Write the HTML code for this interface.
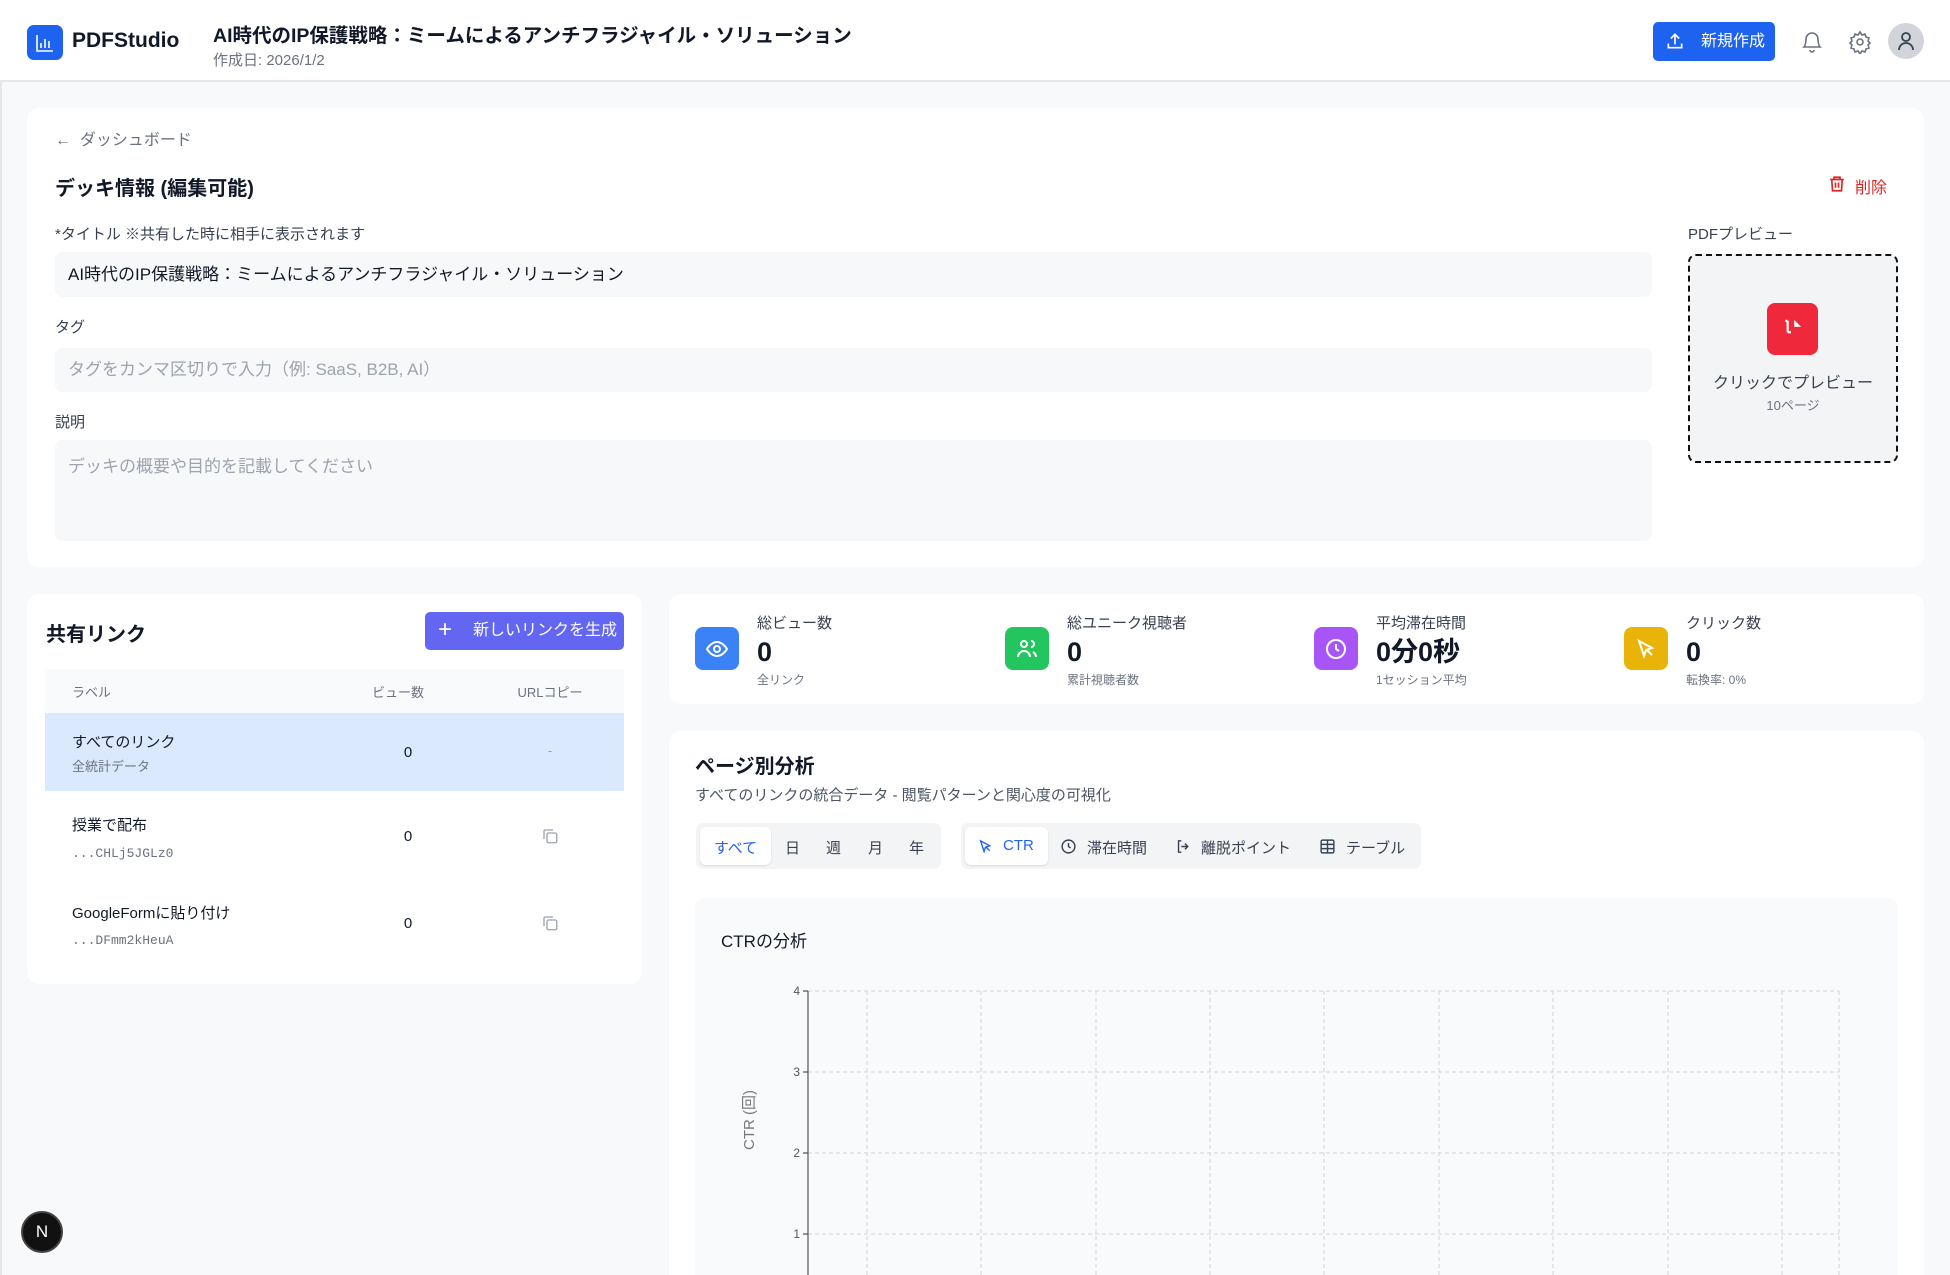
<!DOCTYPE html>
<html style="overflow:hidden;height:1275px"><head><meta charset="utf-8">
<style>
*{box-sizing:border-box;margin:0;padding:0}
html,body{overflow:hidden}
body{width:1950px;height:1275px;background:#f8f9fb;font-family:"Liberation Sans","Noto Sans CJK JP",sans-serif;color:#111827;position:relative}
.a{position:absolute}
.card{position:absolute;background:#fff;border-radius:12px}
.input{position:absolute;background:#f7f8fa;border-radius:8px;font-size:17px;color:#9ca3af;padding-left:13px}
.lbl{position:absolute;font-size:15px;color:#374151}
.stat .v{font-size:27px;font-weight:bold;color:#111827;line-height:34px;margin-top:2px}
.stat .s{font-size:12px;color:#6b7280;margin-top:2px}
</style></head><body>
<div class="a" style="left:0;top:0;width:2px;height:1275px;background:#e5e7eb"></div>
<!-- header -->
<div class="a" style="left:0;top:0;width:1950px;height:82px;background:#fff;border-bottom:2px solid #e5e7eb"></div>
<div class="a" style="left:27px;top:25px;width:36px;height:35px;background:#1d63f0;border-radius:7px"></div>
<svg class="a" style="left:33px;top:31px" width="24" height="24" viewBox="0 0 24 24" fill="none" stroke="#fff" stroke-width="1.6"><path d="M4 4v16h16M8 17v-5M12 17V8M16 17v-7"/></svg>
<div class="a" style="left:72px;top:29px;font-size:21px;font-weight:bold;color:#111827">PDFStudio</div>
<div class="a" style="left:213px;top:19px;font-size:19.5px;font-weight:bold;color:#111827">AI時代のIP保護戦略：ミームによるアンチフラジャイル・ソリューション</div>
<div class="a" style="left:213px;top:49px;font-size:15px;color:#6b7280">作成日: 2026/1/2</div>
<div class="a" style="left:1653px;top:22px;width:122px;height:39px;background:#1d63f0;border-radius:5px;color:#fff;font-size:16px;line-height:39px;padding-left:48px">新規作成</div>
<svg class="a" style="left:1665px;top:31px" width="20" height="20" viewBox="0 0 24 24" fill="none" stroke="#fff" stroke-width="2"><path d="M4 15v5h16v-5M12 16V4M7 9l5-5 5 5"/></svg>
<svg class="a" style="left:1800px;top:30px" width="24" height="24" viewBox="0 0 24 24" fill="none" stroke="#6b7280" stroke-width="1.6"><path d="M6 9a6 6 0 0 1 12 0c0 6 2 8 2 8H4s2-2 2-8M10 20a2 2 0 0 0 4 0"/></svg>
<svg class="a" style="left:1848px;top:30px" width="24" height="24" viewBox="0 0 24 24" fill="none" stroke="#6b7280" stroke-width="1.6"><circle cx="12" cy="12" r="3"/><path d="M12 2l2 3 3-1 1 3 3 1-1 3 2 2-2 2 1 3-3 1-1 3-3-1-2 3-2-3-3 1-1-3-3-1 1-3-2-2 2-2-1-3 3-1 1-3 3 1z"/></svg>
<div class="a" style="left:1888px;top:23px;width:36px;height:36px;border-radius:50%;background:#d1d5db"></div>
<svg class="a" style="left:1894px;top:29px" width="24" height="24" viewBox="0 0 24 24" fill="none" stroke="#374151" stroke-width="1.8"><circle cx="12" cy="8" r="4"/><path d="M5 21a7 7 0 0 1 14 0"/></svg>

<!-- top card -->
<div class="card" style="left:27px;top:108px;width:1897px;height:459px"></div>
<div class="a" style="left:55px;top:126px;font-size:16px;color:#6b7280">←&nbsp; ダッシュボード</div>
<div class="a" style="left:55px;top:172px;font-size:20px;font-weight:bold">デッキ情報 (編集可能)</div>
<svg class="a" style="left:1828px;top:175px" width="18" height="18" viewBox="0 0 24 24" fill="none" stroke="#dc2626" stroke-width="2.2"><path d="M3 6h18M8 6V3h8v3M5 6l1 15h12l1-15M10 10v7M14 10v7"/></svg>
<div class="a" style="left:1855px;top:174px;font-size:16px;color:#dc2626">削除</div>
<div class="lbl" style="left:55px;top:223px">*タイトル ※共有した時に相手に表示されます</div>
<div class="input" style="left:55px;top:252px;width:1597px;height:45px;line-height:45px;color:#111827">AI時代のIP保護戦略：ミームによるアンチフラジャイル・ソリューション</div>
<div class="lbl" style="left:55px;top:316px">タグ</div>
<div class="input" style="left:55px;top:348px;width:1597px;height:44px;line-height:44px">タグをカンマ区切りで入力（例: SaaS, B2B, AI）</div>
<div class="lbl" style="left:55px;top:411px">説明</div>
<div class="input" style="left:55px;top:440px;width:1597px;height:101px;padding-top:12px">デッキの概要や目的を記載してください</div>
<div class="lbl" style="left:1688px;top:223px">PDFプレビュー</div>
<div class="a" style="left:1688px;top:254px;width:210px;height:209px;border:2px dashed #111;border-radius:8px;background:#f3f4f6"></div>
<div class="a" style="left:1767px;top:303px;width:51px;height:52px;background:#f0283c;border-radius:8px"></div>
<svg class="a" style="left:1779px;top:316px" width="26" height="26" viewBox="0 0 24 24" fill="none" stroke="#fff" stroke-width="2"><path d="M6 4l3 2M8 5v10M8 15h3M15 6l3 3h-3z"/></svg>
<div class="a" style="left:1688px;top:369px;width:210px;text-align:center;font-size:16px;color:#374151">クリックでプレビュー</div>
<div class="a" style="left:1688px;top:395px;width:210px;text-align:center;font-size:13px;color:#6b7280">10ページ</div>

<!-- shared links -->
<div class="card" style="left:27px;top:594px;width:615px;height:390px"></div>
<div class="a" style="left:46px;top:618px;font-size:20px;font-weight:bold">共有リンク</div>
<div class="a" style="left:425px;top:612px;width:199px;height:38px;background:#6366f1;border-radius:5px;color:#fff;font-size:16px;line-height:38px;padding-left:48px">新しいリンクを生成</div>
<div class="a" style="left:438px;top:611px;color:#fff;font-size:24px;line-height:38px">+</div>
<div class="a" style="left:45px;top:669px;width:579px;height:44px;background:#f9fafb"></div>
<div class="a" style="left:72px;top:682px;font-size:13px;color:#6b7280">ラベル</div>
<div class="a" style="left:358px;top:682px;width:80px;text-align:center;font-size:13px;color:#6b7280">ビュー数</div>
<div class="a" style="left:500px;top:682px;width:100px;text-align:center;font-size:13px;color:#6b7280">URLコピー</div>
<div class="a" style="left:45px;top:713px;width:579px;height:78px;background:#dbe9fe"></div>
<div class="a" style="left:72px;top:731px;font-size:15px">すべてのリンク</div>
<div class="a" style="left:72px;top:756px;font-size:13px;color:#6b7280">全統計データ</div>
<div class="a" style="left:368px;top:744px;width:80px;text-align:center;font-size:15px">0</div>
<div class="a" style="left:500px;top:743px;width:100px;text-align:center;font-size:13px;color:#9ca3af">-</div>
<div class="a" style="left:72px;top:814px;font-size:15px">授業で配布</div>
<div class="a" style="left:72px;top:846px;font-size:13px;color:#6b7280;font-family:'Liberation Mono',monospace">...CHLj5JGLz0</div>
<div class="a" style="left:368px;top:828px;width:80px;text-align:center;font-size:15px">0</div>
<div class="a" style="left:72px;top:902px;font-size:15px">GoogleFormに貼り付け</div>
<div class="a" style="left:72px;top:933px;font-size:13px;color:#6b7280;font-family:'Liberation Mono',monospace">...DFmm2kHeuA</div>
<div class="a" style="left:368px;top:915px;width:80px;text-align:center;font-size:15px">0</div>
<svg class="a" style="left:541px;top:827px" width="18" height="18" viewBox="0 0 24 24" fill="none" stroke="#9ca3af" stroke-width="1.8"><rect x="8" y="8" width="13" height="13" rx="2"/><path d="M4 16V5a2 2 0 0 1 1-1h11"/></svg>
<svg class="a" style="left:541px;top:914px" width="18" height="18" viewBox="0 0 24 24" fill="none" stroke="#9ca3af" stroke-width="1.8"><rect x="8" y="8" width="13" height="13" rx="2"/><path d="M4 16V5a2 2 0 0 1 1-1h11"/></svg>

<!-- stats -->
<div class="card" style="left:669px;top:594px;width:1255px;height:110px"></div>
<div class="a" style="left:695px;top:627px;width:44px;height:43px;border-radius:8px;background:#3b82f6"></div>
<svg class="a" style="left:705px;top:637px" width="24" height="24" viewBox="0 0 24 24" fill="none" stroke="#fff" stroke-width="2"><path d="M2 12s4-7 10-7 10 7 10 7-4 7-10 7S2 12 2 12z"/><circle cx="12" cy="12" r="3"/></svg>
<div class="a" style="left:1005px;top:627px;width:44px;height:43px;border-radius:8px;background:#22c55e"></div>
<svg class="a" style="left:1015px;top:637px" width="24" height="24" viewBox="0 0 24 24" fill="none" stroke="#fff" stroke-width="2"><circle cx="9" cy="7" r="3"/><path d="M3 20a6 6 0 0 1 12 0M16 4a3 3 0 0 1 0 6M21 20a6 6 0 0 0-3-5"/></svg>
<div class="a" style="left:1314px;top:627px;width:44px;height:43px;border-radius:8px;background:#a855f7"></div>
<svg class="a" style="left:1324px;top:637px" width="24" height="24" viewBox="0 0 24 24" fill="none" stroke="#fff" stroke-width="2"><circle cx="12" cy="12" r="9"/><path d="M12 7v5l3 2"/></svg>
<div class="a" style="left:1624px;top:627px;width:44px;height:43px;border-radius:8px;background:#eab308"></div>
<svg class="a" style="left:1634px;top:637px" width="24" height="24" viewBox="0 0 24 24" fill="none" stroke="#fff" stroke-width="2"><path d="M5 4l5 15 2-6 6-2z"/><path d="M13 13l5 5"/></svg>
<div class="a stat" style="left:757px;top:612px"><div style="font-size:15px;color:#374151">総ビュー数</div><div class="v">0</div><div class="s">全リンク</div></div>
<div class="a stat" style="left:1067px;top:612px"><div style="font-size:15px;color:#374151">総ユニーク視聴者</div><div class="v">0</div><div class="s">累計視聴者数</div></div>
<div class="a stat" style="left:1376px;top:612px"><div style="font-size:15px;color:#374151">平均滞在時間</div><div class="v">0分0秒</div><div class="s">1セッション平均</div></div>
<div class="a stat" style="left:1686px;top:612px"><div style="font-size:15px;color:#374151">クリック数</div><div class="v">0</div><div class="s">転換率: 0%</div></div>

<!-- analysis -->
<div class="card" style="left:669px;top:731px;width:1255px;height:544px;border-radius:12px 12px 0 0"></div>
<div class="a" style="left:695px;top:750px;font-size:20px;font-weight:bold">ページ別分析</div>
<div class="a" style="left:695px;top:784px;font-size:15px;color:#4b5563">すべてのリンクの統合データ - 閲覧パターンと関心度の可視化</div>
<div class="a" style="left:696px;top:823px;width:245px;height:46px;background:#f3f4f6;border-radius:7px"></div>
<div class="a" style="left:700px;top:827px;width:71px;height:38px;background:#fff;border-radius:6px;box-shadow:0 1px 2px rgba(0,0,0,.1)"></div>
<div class="a" style="left:700px;top:837px;width:71px;text-align:center;font-size:15px;color:#2563eb">すべて</div>
<div class="a" style="left:785px;top:837px;font-size:15px;color:#374151">日</div>
<div class="a" style="left:826px;top:837px;font-size:15px;color:#374151">週</div>
<div class="a" style="left:868px;top:837px;font-size:15px;color:#374151">月</div>
<div class="a" style="left:909px;top:837px;font-size:15px;color:#374151">年</div>
<div class="a" style="left:961px;top:823px;width:460px;height:46px;background:#f3f4f6;border-radius:7px"></div>
<div class="a" style="left:965px;top:827px;width:83px;height:38px;background:#fff;border-radius:6px;box-shadow:0 1px 2px rgba(0,0,0,.1)"></div>
<svg class="a" style="left:977px;top:838px" width="17" height="17" viewBox="0 0 24 24" fill="none" stroke="#2563eb" stroke-width="2"><path d="M5 4l5 15 2-6 6-2z"/><path d="M13 13l5 5"/></svg>
<div class="a" style="left:1003px;top:837px;font-size:15px;color:#2563eb">CTR</div>
<svg class="a" style="left:1060px;top:838px" width="17" height="17" viewBox="0 0 24 24" fill="none" stroke="#374151" stroke-width="2"><circle cx="12" cy="12" r="9"/><path d="M12 7v5l3 2"/></svg>
<div class="a" style="left:1087px;top:837px;font-size:15px;color:#374151">滞在時間</div>
<svg class="a" style="left:1175px;top:838px" width="17" height="17" viewBox="0 0 24 24" fill="none" stroke="#374151" stroke-width="2"><path d="M9 4H5v16h4M14 8l4 4-4 4M18 12H9"/></svg>
<div class="a" style="left:1201px;top:837px;font-size:15px;color:#374151">離脱ポイント</div>
<svg class="a" style="left:1319px;top:838px" width="17" height="17" viewBox="0 0 24 24" fill="none" stroke="#374151" stroke-width="2"><rect x="3" y="3" width="18" height="18" rx="2"/><path d="M3 9h18M3 15h18M12 3v18"/></svg>
<div class="a" style="left:1346px;top:837px;font-size:15px;color:#374151">テーブル</div>

<div class="a" style="left:695px;top:898px;width:1203px;height:377px;background:#f9fafb;border-radius:10px 10px 0 0"></div>
<div class="a" style="left:721px;top:927px;font-size:17px;color:#111827">CTRの分析</div>
<svg class="a" style="left:695px;top:960px" width="1203" height="315" viewBox="695 960 1203 315">
<g stroke="#d1d5db" stroke-width="1" stroke-dasharray="4 3" fill="none">
<path d="M808 991H1839M808 1072H1839M808 1153H1839M808 1234H1839"/>
<path d="M867 991V1275M981 991V1275M1096 991V1275M1210 991V1275M1324 991V1275M1439 991V1275M1553 991V1275M1668 991V1275M1782 991V1275M1839 991V1275"/>
</g>
<path d="M808 991V1275M803 991H808M803 1072H808M803 1153H808M803 1234H808" stroke="#555" stroke-width="1.2" fill="none"/>
<g font-family="Liberation Sans,sans-serif" font-size="12" fill="#555" text-anchor="end">
<text x="800" y="995">4</text><text x="800" y="1076">3</text><text x="800" y="1157">2</text><text x="800" y="1238">1</text>
</g>
<text x="754" y="1120" transform="rotate(-90 754 1120)" font-family="Liberation Sans,'Noto Sans CJK JP',sans-serif" font-size="15" fill="#777" text-anchor="middle">CTR (回)</text>
</svg>

<div class="a" style="left:21px;top:1211px;width:42px;height:42px;border-radius:50%;background:#111;border:2px solid #444;color:#fff;font-size:17px;line-height:38px;text-align:center">N</div>
</body></html>
